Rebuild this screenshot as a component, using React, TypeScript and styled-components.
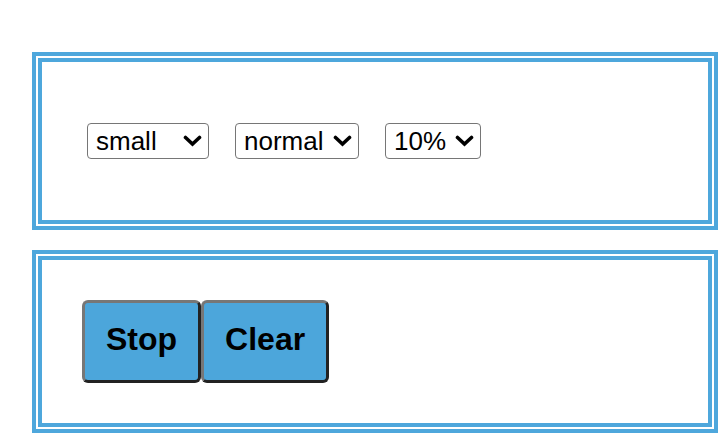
import React from "react";
import styled, { createGlobalStyle } from "styled-components";

const GlobalStyle = createGlobalStyle`
  html, body {
    margin: 0;
    padding: 0;
    background: #ffffff;
    font-family: "Liberation Sans", Arial, sans-serif;
    overflow: hidden;
  }
`;

const Page = styled.div`
  display: flex;
  flex-direction: column;
  gap: 20px;
  padding: 52px 0 0 32px;
`;

const Panel = styled.div`
  border: 4px solid #4ea7dc;
  box-shadow: inset 0 0 0 2px #ffffff, inset 0 0 0 6px #4ea7dc;
  padding: 46px;
  display: flex;
  align-items: center;
`;

const SelectRow = styled.div`
  display: flex;
  align-items: center;
  gap: 26px;
  padding: 21px 5px;
`;

const SelectWrap = styled.div`
  position: relative;
  display: inline-flex;
`;

const Dropdown = styled.select<{ $w: number }>`
  appearance: none;
  -webkit-appearance: none;
  width: ${(p) => p.$w}px;
  height: 36px;
  box-sizing: border-box;
  font-family: "Liberation Sans", Arial, sans-serif;
  font-size: 26px;
  color: #000;
  background: #fff;
  border: 1px solid #767676;
  border-radius: 4px;
  padding: 0 0 0 8px;
  margin: 0;
`;

const Chevron = styled.svg`
  position: absolute;
  right: 7px;
  top: 12px;
  width: 19px;
  height: 12px;
  pointer-events: none;
`;

const ButtonRow = styled.div`
  display: flex;
  align-items: stretch;
`;

const ActionButton = styled.button`
  font-family: "Liberation Sans", Arial, sans-serif;
  font-size: 32px;
  font-weight: bold;
  line-height: normal;
  color: #000;
  background: #4ca6db;
  padding: 18px 21px 22px;
  border: 3px solid;
  border-color: #777777 #222222 #222222 #777777;
  border-radius: 6px;
  margin: 0;
  cursor: pointer;
`;

function Select({ w, value, options }: { w: number; value: string; options: string[] }) {
  return (
    <SelectWrap>
      <Dropdown $w={w} defaultValue={value}>
        {options.map((o) => (
          <option key={o} value={o}>
            {o}
          </option>
        ))}
      </Dropdown>
      <Chevron viewBox="0 0 19 12">
        <polyline
          points="2.5,2.5 9.5,9 16.5,2.5"
          fill="none"
          stroke="#000"
          strokeWidth="3.6"
          strokeLinecap="round"
          strokeLinejoin="miter"
        />
      </Chevron>
    </SelectWrap>
  );
}

export default function App() {
  return (
    <>
      <GlobalStyle />
      <Page>
        <Panel>
          <SelectRow>
            <Select w={122} value="small" options={["small", "medium", "large"]} />
            <Select w={124} value="normal" options={["normal", "bold"]} />
            <Select w={96} value="10%" options={["10%", "20%", "50%"]} />
          </SelectRow>
        </Panel>
        <Panel>
          <ButtonRow>
            <ActionButton>Stop</ActionButton>
            <ActionButton>Clear</ActionButton>
          </ButtonRow>
        </Panel>
      </Page>
    </>
  );
}
